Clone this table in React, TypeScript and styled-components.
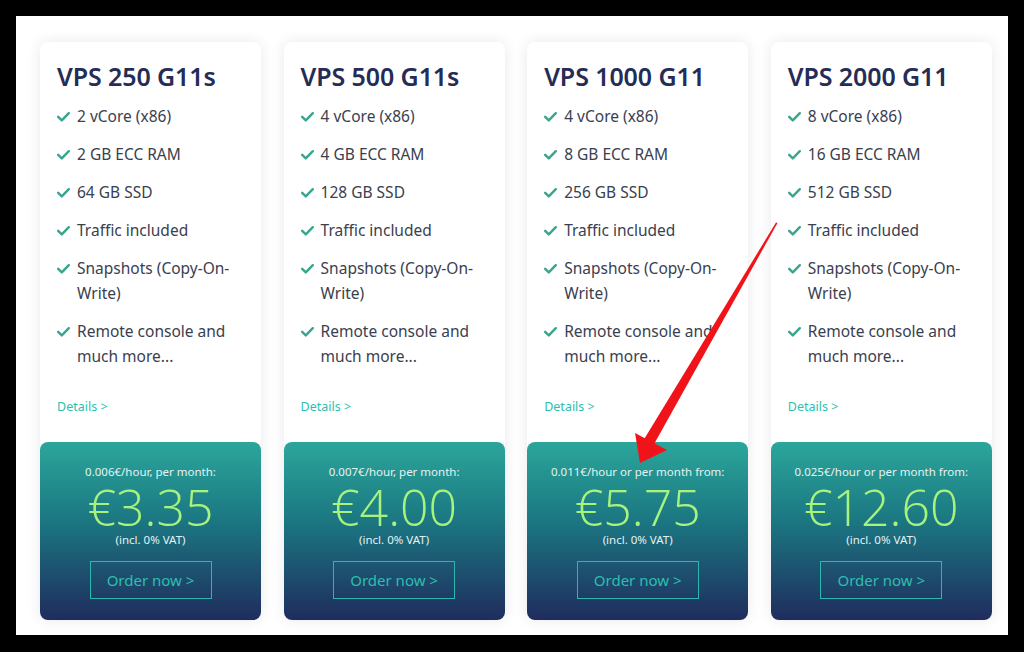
import React from "react";
import styled, { createGlobalStyle } from "styled-components";

const Global = createGlobalStyle`
  html, body { margin: 0; padding: 0; background: #000; }
  body { font-family: "Noto Sans", "Open Sans", sans-serif; }
`;

const Frame = styled.div`
  width: 1024px;
  height: 652px;
  background: #000;
  padding: 16px 16px 17px 16px;
  box-sizing: border-box;
  position: relative;
`;

const Sheet = styled.div`
  width: 992px;
  height: 619px;
  background: #fff;
  box-sizing: border-box;
  padding: 26px 0 0 24px;
`;

const Grid = styled.div`
  display: grid;
  grid-template-columns: repeat(4, 221px);
  column-gap: 22.6px;
`;

const Card = styled.div`
  height: 578px;
  border-radius: 8px;
  background: #fff;
  box-shadow: 0 0 14px rgba(30, 40, 80, 0.1);
  display: flex;
  flex-direction: column;
`;

const Top = styled.div`
  height: 400px;
  box-sizing: border-box;
  padding: 18px 14px 0 17px;
  display: flex;
  flex-direction: column;
`;

const Title = styled.h2`
  margin: 0;
  font-size: 25px;
  font-weight: 600;
  color: #252c55;
  line-height: 32px;
  letter-spacing: -0.1px;
`;

const List = styled.ul`
  list-style: none;
  margin: 12px 0 0 0;
  padding: 0;
  display: flex;
  flex-direction: column;
  gap: 13px;
`;

const Item = styled.li`
  display: flex;
  align-items: flex-start;
  gap: 7px;
  font-size: 15.5px;
  line-height: 25px;
  color: #3a4050;
`;

const Check = styled.svg`
  flex: 0 0 auto;
  width: 13px;
  height: 25px;
`;

const Details = styled.a`
  margin-top: auto;
  margin-bottom: 27px;
  font-size: 12.5px;
  color: #2cbfb1;
  text-decoration: none;
`;

const Price = styled.div`
  height: 178px;
  border-radius: 8px;
  background: linear-gradient(180deg, #2ba69b 0%, #1b7681 45%, #1f2c5d 100%);
  display: flex;
  flex-direction: column;
  align-items: center;
  padding-top: 22px;
  box-sizing: border-box;
`;

const Rate = styled.div`
  font-size: 11.5px;
  color: #e3f3f1;
  line-height: 16px;
`;

const Amount = styled.div`
  font-family: "Open Sans", "Noto Sans", sans-serif;
  font-size: 50px;
  font-weight: 300;
  color: #a8f37c;
  line-height: 50px;
  margin-top: 2px;
`;

const Vat = styled.div`
  font-size: 11.5px;
  color: #e3f3f1;
  line-height: 14px;
  margin-top: 1px;
`;

const Button = styled.a`
  margin-top: 14px;
  width: 122px;
  height: 38px;
  box-sizing: border-box;
  border: 1px solid #2ab7ad;
  display: flex;
  align-items: center;
  justify-content: center;
  color: #2cbfb1;
  font-size: 15px;
  text-decoration: none;
`;

const Arrow = styled.svg`
  position: absolute;
  left: 0;
  top: 0;
  pointer-events: none;
`;

const features = (cpu: string, ram: string, ssd: string) => [
  `${cpu} vCore (x86)`,
  `${ram} GB ECC RAM`,
  `${ssd} GB SSD`,
  "Traffic included",
  "Snapshots (Copy-On-Write)",
  "Remote console and much more...",
];

const plans = [
  { name: "VPS 250 G11s", f: features("2", "2", "64"), rate: "0.006€/hour, per month:", price: "€3.35" },
  { name: "VPS 500 G11s", f: features("4", "4", "128"), rate: "0.007€/hour, per month:", price: "€4.00" },
  { name: "VPS 1000 G11", f: features("4", "8", "256"), rate: "0.011€/hour or per month from:", price: "€5.75" },
  { name: "VPS 2000 G11", f: features("8", "16", "512"), rate: "0.025€/hour or per month from:", price: "€12.60" },
];

const CheckIcon = () => (
  <Check viewBox="0 0 13 25">
    <path d="M1.2 12.8 L4.8 16.4 L11.8 9.2" fill="none" stroke="#3aa58e" strokeWidth="2.4" strokeLinecap="round" strokeLinejoin="round" />
  </Check>
);

export default function App() {
  return (
    <>
      <Global />
      <Frame>
        <Sheet>
          <Grid>
            {plans.map((p) => (
              <Card key={p.name}>
                <Top>
                  <Title>{p.name}</Title>
                  <List>
                    {p.f.map((t) => (
                      <Item key={t}>
                        <CheckIcon />
                        <span>{t}</span>
                      </Item>
                    ))}
                  </List>
                  <Details href="#">Details &gt;</Details>
                </Top>
                <Price>
                  <Rate>{p.rate}</Rate>
                  <Amount>{p.price}</Amount>
                  <Vat>(incl. 0% VAT)</Vat>
                  <Button href="#">Order now &gt;</Button>
                </Price>
              </Card>
            ))}
          </Grid>
        </Sheet>
        <Arrow width="1024" height="652" viewBox="0 0 1024 652">
          <polygon points="777.5,223 776,222.5 643,441 653,446" fill="#f0141a" />
          <polygon points="640,463 635,433 667,450" fill="#f0141a" />
        </Arrow>
      </Frame>
    </>
  );
}
